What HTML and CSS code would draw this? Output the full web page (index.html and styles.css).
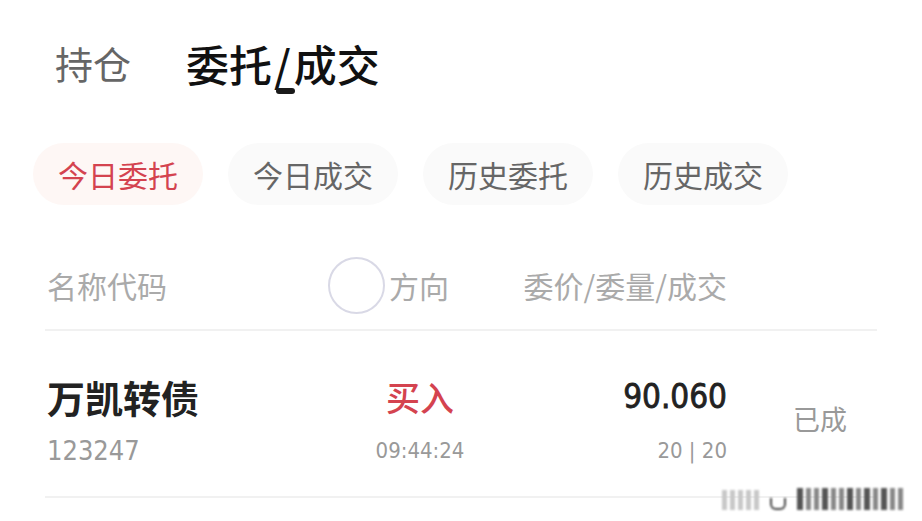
FILE: index.html
```html
<!DOCTYPE html>
<html lang="zh-CN">
<head>
    <meta charset="UTF-8">
    <meta name="viewport" content="width=device-width, initial-scale=1.0">
    <title>委托/成交</title>
    <link rel="stylesheet" href="styles.css">
</head>
<body>
<header class="top-tabs">
    <span class="top-tab">持仓</span>
    <span class="top-tab active">委托<span class="slash">/<i class="indicator"></i></span>成交</span>
</header>

<nav class="pills">
    <span class="pill active">今日委托</span>
    <span class="pill">今日成交</span>
    <span class="pill">历史委托</span>
    <span class="pill">历史成交</span>
</nav>

<main class="table">
    <div class="table-head">
        <span class="col-name">名称代码</span>
        <span class="col-dir"><i class="loading"></i>方向</span>
        <span class="col-price">委价/委量/成交</span>
        <span class="col-status"></span>
    </div>

    <div class="table-row">
        <div class="col-name">
            <div class="name">万凯转债</div>
            <div class="sub num">123247</div>
        </div>
        <div class="col-dir center">
            <div class="buy">买入</div>
            <div class="sub num small">09:44:24</div>
        </div>
        <div class="col-price">
            <div class="price num">90.060</div>
            <div class="sub num small">20 | 20</div>
        </div>
        <div class="col-status">
            <span class="status">已成</span>
        </div>
    </div>
</main>

<!-- blurry watermark in the corner -->
<div class="watermark">
    <i class="w1"></i><i class="w1"></i><i class="w1"></i><i class="w1"></i><i class="w1"></i>
    <i class="cup"></i>
    <i class="w2"></i><i class="w3"></i><i class="w3"></i><i class="w2"></i><i class="w3"></i><i class="w3"></i>
    <i class="w2"></i><i class="w3"></i><i class="w2"></i><i class="w3"></i><i class="w2"></i><i class="w3"></i><i class="w3"></i>
</div>
</body>
</html>
```

FILE: styles.css
```css
/* General */
body {
    margin: 0;
    padding: 0;
    background: #fff;
    font-family: "Noto Sans CJK SC", "Noto Sans", sans-serif;
    color: #222;
    position: relative;
    height: 521px;
    overflow: hidden;
}

.num {
    font-family: "DejaVu Sans Condensed", "DejaVu Sans", sans-serif;
    font-stretch: condensed;
}

/* Top tabs */
.top-tabs {
    display: flex;
    align-items: center;
    gap: 55px;
    padding: 40px 0 0 55px;
    height: 46px;
}

.top-tab {
    font-size: 38px;
    line-height: 46px;
    color: #666;
}

.top-tab.active {
    font-size: 43px;
    font-weight: 500;
    color: #111;
}

.slash {
    position: relative;
    margin: 0 3px 0 2px;
}

.indicator {
    position: absolute;
    left: 2px;
    bottom: 0;
    width: 19px;
    height: 6px;
    border-radius: 3px;
    background: #1a1a1a;
}

/* Filter pills */
.pills {
    display: flex;
    gap: 25px;
    padding: 57px 0 0 33px;
}

.pill {
    height: 62px;
    line-height: 62px;
    padding: 0 25px;
    border-radius: 31px;
    background: #fafafa;
    color: #666;
    font-size: 30px;
}

.pill.active {
    background: #fef7f5;
    color: #d4434f;
}

/* Table */
.table {
    margin: 0 45px;
}

.table-head,
.table-row {
    display: grid;
    grid-template-columns: 283px 182px 217px 1fr;
    border-bottom: 2px solid #f1f1f1;
}

.table-head {
    height: 88px;
    margin-top: 36px;
    align-items: center;
    color: #aaa;
    font-size: 30px;
}

.table-head .col-name {
    padding-left: 2px;
}

.table-head .col-dir {
    display: flex;
    align-items: center;
    gap: 4px;
}

.loading {
    width: 53px;
    height: 53px;
    border: 2px solid #d9d9e6;
    border-radius: 50%;
}

.col-price {
    text-align: right;
}

.col-status {
    padding-left: 66px;
}

.table-row {
    padding: 46px 0 30px;
}

.table-row .col-name {
    padding-left: 2px;
}

.center {
    text-align: center;
    padding-left: 2px;
}

.name {
    font-size: 38px;
    font-weight: 700;
    line-height: 40px;
    color: #222;
}

.buy {
    font-size: 34px;
    font-weight: 500;
    line-height: 40px;
    color: #d4434f;
}

.price {
    font-size: 33px;
    line-height: 40px;
    color: #222;
    -webkit-text-stroke: 0.8px #222;
}

.sub {
    margin-top: 19px;
    line-height: 30px;
    font-size: 27px;
    color: #999;
}

.sub.small {
    font-size: 22px;
}

.table-row .col-status {
    align-self: center;
    padding-bottom: 6px;
}

.status {
    font-size: 27px;
    color: #999;
}

/* Watermark */
.watermark {
    position: absolute;
    left: 722px;
    top: 484px;
    display: flex;
    align-items: flex-end;
    gap: 3px;
    height: 26px;
    filter: blur(1px);
}

.watermark i {
    display: block;
    width: 6px;
    height: 22px;
}

.watermark .w1 {
    background: #c8c8c8;
    width: 5px;
    height: 20px;
}

.watermark .cup {
    width: 12px;
    height: 10px;
    margin: 0 8px;
    border: 2px solid #444;
    border-top: none;
    border-radius: 0 0 6px 6px;
}

.watermark .w2 {
    background: #555;
}

.watermark .w3 {
    background: #888;
    width: 5px;
}
```
